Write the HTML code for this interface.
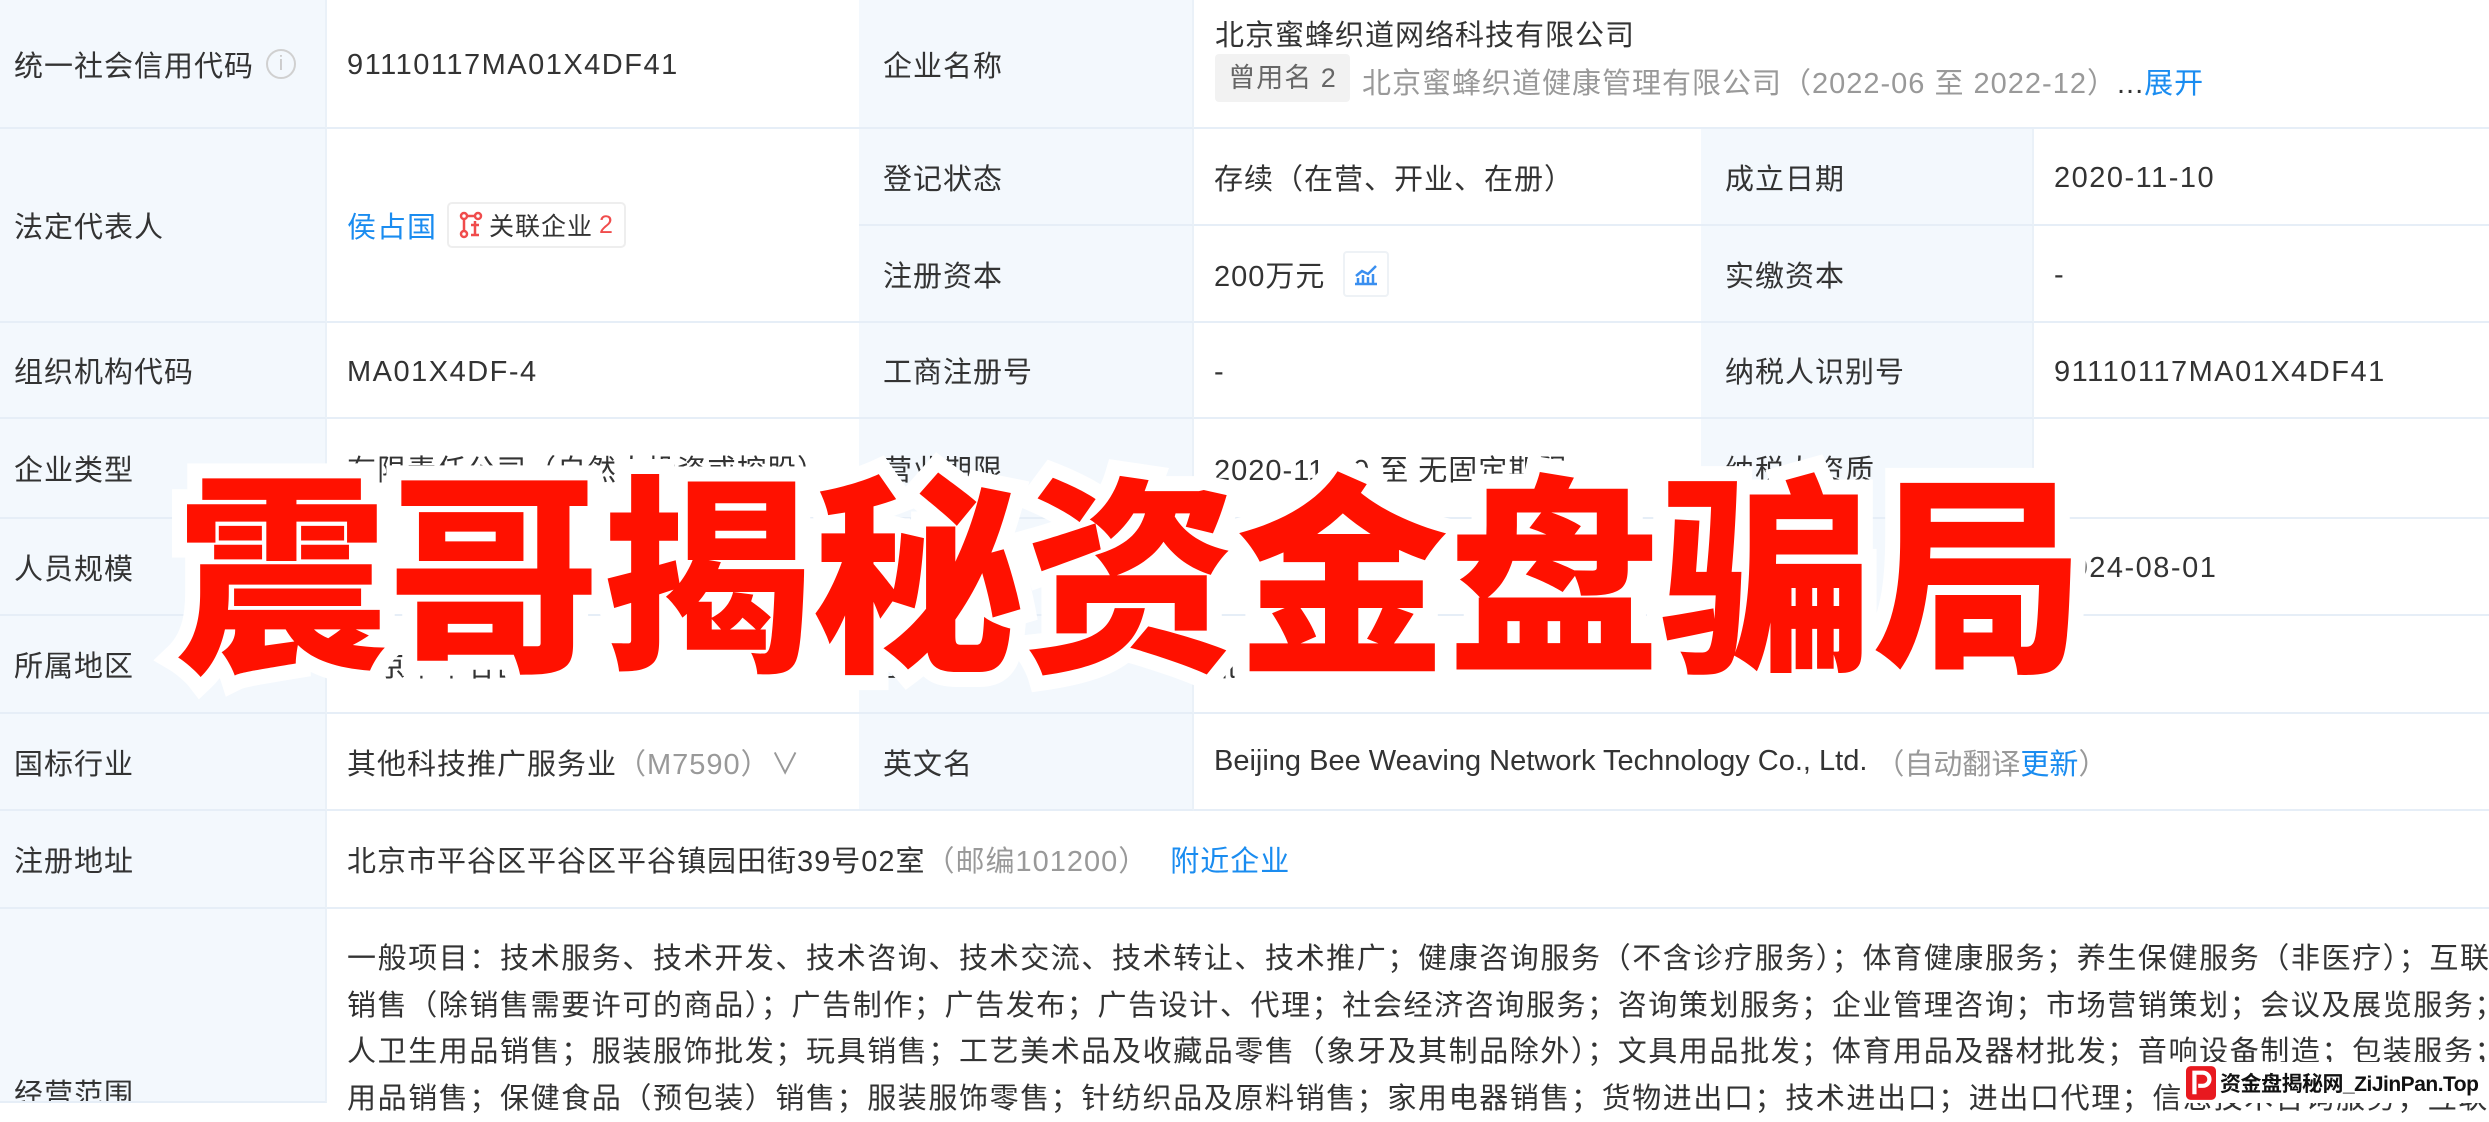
<!DOCTYPE html>
<html><head><meta charset="utf-8"><style>
*{margin:0;padding:0;box-sizing:border-box}
body{width:2489px;height:1103px;overflow:hidden;background:#fff;font-family:"Liberation Sans","Noto Sans CJK SC",sans-serif;color:#333;font-size:29px;letter-spacing:1px;position:relative}
.c{position:absolute;display:flex;align-items:center;border-bottom:2px solid #e6eef7;white-space:nowrap;overflow:hidden}
.l{background:#f3f8fd;padding-left:14px;border-right:2px solid #eaf1f8}
.v{background:#fff;padding-left:20px}
.n{letter-spacing:1.5px;padding-top:4px}
.g{color:#999}
.b{color:#1a8cf0}
.big{position:absolute;left:176px;top:458px;font-family:"Noto Sans CJK SC","WenQuanYi Zen Hei",sans-serif;font-weight:900;font-size:212px;line-height:1;letter-spacing:0;color:#ff1100;-webkit-text-stroke:30px #fff;paint-order:stroke fill;white-space:nowrap}
.scope{position:absolute;left:347px;top:936px;line-height:46.5px;white-space:nowrap;letter-spacing:1.6px}
</style></head><body>
<!-- row1 -->
<div class="c l" style="left:0;top:0;width:327px;height:129px">统一社会信用代码<span style="display:inline-block;width:30px;height:30px;border:2px solid #d0d0d0;border-radius:50%;color:#c8c8c8;font-size:20px;text-align:center;line-height:26px;margin-left:12px;letter-spacing:0">i</span></div>
<div class="c v n" style="left:327px;top:0;width:532px;height:129px">91110117MA01X4DF41</div>
<div class="c l" style="left:859px;top:0;width:335px;height:129px;padding-left:24px">企业名称</div>
<div class="c v" style="left:1194px;top:0;width:1295px;height:129px;padding-left:21px;display:block">
<div style="position:absolute;left:21px;top:12px">北京蜜蜂织道网络科技有限公司</div>
<div style="position:absolute;left:21px;top:54px;height:48px;width:135px;background:#f2f2f2;border-radius:4px;color:#666;line-height:48px;text-align:center;font-size:27px">曾用名 2</div>
<div style="position:absolute;left:168px;top:60px;color:#999">北京蜜蜂织道健康管理有限公司（2022-06 至 2022-12）<span style="color:#333">...</span><span class="b">展开</span></div>
</div>
<!-- row2 -->
<div class="c l" style="left:0;top:129px;width:327px;height:194px">法定代表人</div>
<div class="c v" style="left:327px;top:129px;width:532px;height:194px"><span class="b">侯占国</span>
<span style="margin-left:10px;display:inline-flex;align-items:center;height:46px;border:2px solid #eee;border-radius:5px;padding:0 10px;font-size:25px">
<svg width="24" height="28" viewBox="0 0 24 28" style="margin-right:6px"><g fill="none" stroke="#f04c4c" stroke-width="2.5"><circle cx="5" cy="5" r="3"/><circle cx="19" cy="5" r="3"/><circle cx="5" cy="23" r="3"/><path d="M8 5h8M5 8v12M12 14h8M16 10v14M12 24h8"/></g></svg>关联企业 <span style="color:#f04c4c;margin-left:6px">2</span></span></div>
<div class="c l" style="left:859px;top:129px;width:335px;height:97px;padding-left:24px">登记状态</div>
<div class="c v" style="left:1194px;top:129px;width:507px;height:97px">存续（在营、开业、在册）</div>
<div class="c l" style="left:1701px;top:129px;width:333px;height:97px;padding-left:24px">成立日期</div>
<div class="c v n" style="left:2034px;top:129px;width:455px;height:97px">2020-11-10</div>
<div class="c l" style="left:859px;top:226px;width:335px;height:97px;padding-left:24px">注册资本</div>
<div class="c v" style="left:1194px;top:226px;width:507px;height:97px">200万元<span style="margin-left:18px;display:inline-flex;align-items:center;justify-content:center;width:46px;height:46px;border:2px solid #eef2f6;border-radius:4px"><svg width="26" height="24" viewBox="0 0 26 24"><g fill="none" stroke="#3a8ff0" stroke-width="2.5"><path d="M3 14l6-5 6 3 8-8"/><path d="M5 16v5M10 13v8M15 15v6M20 12v9M2 22h22"/></g></svg></span></div>
<div class="c l" style="left:1701px;top:226px;width:333px;height:97px;padding-left:24px">实缴资本</div>
<div class="c v n" style="left:2034px;top:226px;width:455px;height:97px">-</div>
<!-- row3 -->
<div class="c l" style="left:0;top:323px;width:327px;height:96px">组织机构代码</div>
<div class="c v n" style="left:327px;top:323px;width:532px;height:96px">MA01X4DF-4</div>
<div class="c l" style="left:859px;top:323px;width:335px;height:96px;padding-left:24px">工商注册号</div>
<div class="c v n" style="left:1194px;top:323px;width:507px;height:96px">-</div>
<div class="c l" style="left:1701px;top:323px;width:333px;height:96px;padding-left:24px">纳税人识别号</div>
<div class="c v n" style="left:2034px;top:323px;width:455px;height:96px">91110117MA01X4DF41</div>
<!-- row4 -->
<div class="c l" style="left:0;top:419px;width:327px;height:100px">企业类型</div>
<div class="c v" style="left:327px;top:419px;width:532px;height:100px">有限责任公司（自然人投资或控股）</div>
<div class="c l" style="left:859px;top:419px;width:335px;height:100px;padding-left:24px">营业期限</div>
<div class="c v" style="left:1194px;top:419px;width:507px;height:100px">2020-11-10 至 无固定期限</div>
<div class="c l" style="left:1701px;top:419px;width:333px;height:100px;padding-left:24px">纳税人资质</div>
<div class="c v" style="left:2034px;top:419px;width:455px;height:100px">-</div>
<!-- row5 -->
<div class="c l" style="left:0;top:519px;width:327px;height:97px">人员规模</div>
<div class="c v" style="left:327px;top:519px;width:532px;height:97px">-</div>
<div class="c l" style="left:859px;top:519px;width:335px;height:97px;padding-left:24px">参保人数</div>
<div class="c v" style="left:1194px;top:519px;width:507px;height:97px">4</div>
<div class="c l" style="left:1701px;top:519px;width:333px;height:97px;padding-left:24px">核准日期</div>
<div class="c v n" style="left:2034px;top:519px;width:455px;height:97px">2024-08-01</div>
<!-- row6 -->
<div class="c l" style="left:0;top:616px;width:327px;height:98px">所属地区</div>
<div class="c v" style="left:327px;top:616px;width:532px;height:98px">北京市平谷区</div>
<div class="c l" style="left:859px;top:616px;width:335px;height:98px;padding-left:24px">登记机关</div>
<div class="c v" style="left:1194px;top:616px;width:1295px;height:98px">北京市平谷区市场监督管理局</div>
<!-- row7 -->
<div class="c l" style="left:0;top:714px;width:327px;height:97px">国标行业</div>
<div class="c v" style="left:327px;top:714px;width:532px;height:97px">其他科技推广服务业<span class="g">（M7590）∨</span></div>
<div class="c l" style="left:859px;top:714px;width:335px;height:97px;padding-left:24px">英文名</div>
<div class="c v" style="left:1194px;top:714px;width:1295px;height:97px;letter-spacing:0">Beijing Bee Weaving Network Technology Co., Ltd.<span class="g" style="margin-left:8px">（自动翻译<span class="b">更新</span>）</span></div>
<!-- row8 -->
<div class="c l" style="left:0;top:811px;width:327px;height:98px">注册地址</div>
<div class="c v" style="left:327px;top:811px;width:2162px;height:98px">北京市平谷区平谷区平谷镇园田街39号02室<span class="g">（邮编101200）</span><span class="b" style="margin-left:22px">附近企业</span></div>
<!-- row9 -->
<div class="c l" style="left:0;top:909px;width:327px;height:194px;align-items:flex-end;padding-bottom:0"><span style="position:relative;top:12px">经营范围</span></div>
<div class="c v" style="left:327px;top:909px;width:2162px;height:194px;border-bottom:0"></div>
<div class="scope">一般项目：技术服务、技术开发、技术咨询、技术交流、技术转让、技术推广；健康咨询服务（不含诊疗服务）；体育健康服务；养生保健服务（非医疗）；互联网<br>销售（除销售需要许可的商品）；广告制作；广告发布；广告设计、代理；社会经济咨询服务；咨询策划服务；企业管理咨询；市场营销策划；会议及展览服务；个<br>人卫生用品销售；服装服饰批发；玩具销售；工艺美术品及收藏品零售（象牙及其制品除外）；文具用品批发；体育用品及器材批发；音响设备制造；包装服务；日<br>用品销售；保健食品（预包装）销售；服装服饰零售；针纺织品及原料销售；家用电器销售；货物进出口；技术进出口；进出口代理；信息技术咨询服务；互联网</div>
<!-- watermark -->
<div style="position:absolute;left:2180px;top:1062px;width:309px;height:41px;background:#fff;display:flex;align-items:center;letter-spacing:0;white-space:nowrap">
<svg width="30" height="34" viewBox="0 0 32 36" style="margin-left:6px;flex:none"><rect x="0" y="0" width="32" height="36" rx="5" fill="#e8191f"/><path d="M9 30V7h9a7 7 0 0 1 0 14h-5" fill="none" stroke="#fff" stroke-width="4.5"/></svg>
<span style="font-weight:bold;font-size:21px;letter-spacing:-0.5px;color:#111;margin-left:4px;white-space:nowrap;font-family:'Liberation Sans','Noto Sans CJK SC',sans-serif">资金盘揭秘网_ZiJinPan.Top</span></div>
<!-- overlay -->
<div class="big">震哥揭秘资金盘骗局</div>
</body></html>
